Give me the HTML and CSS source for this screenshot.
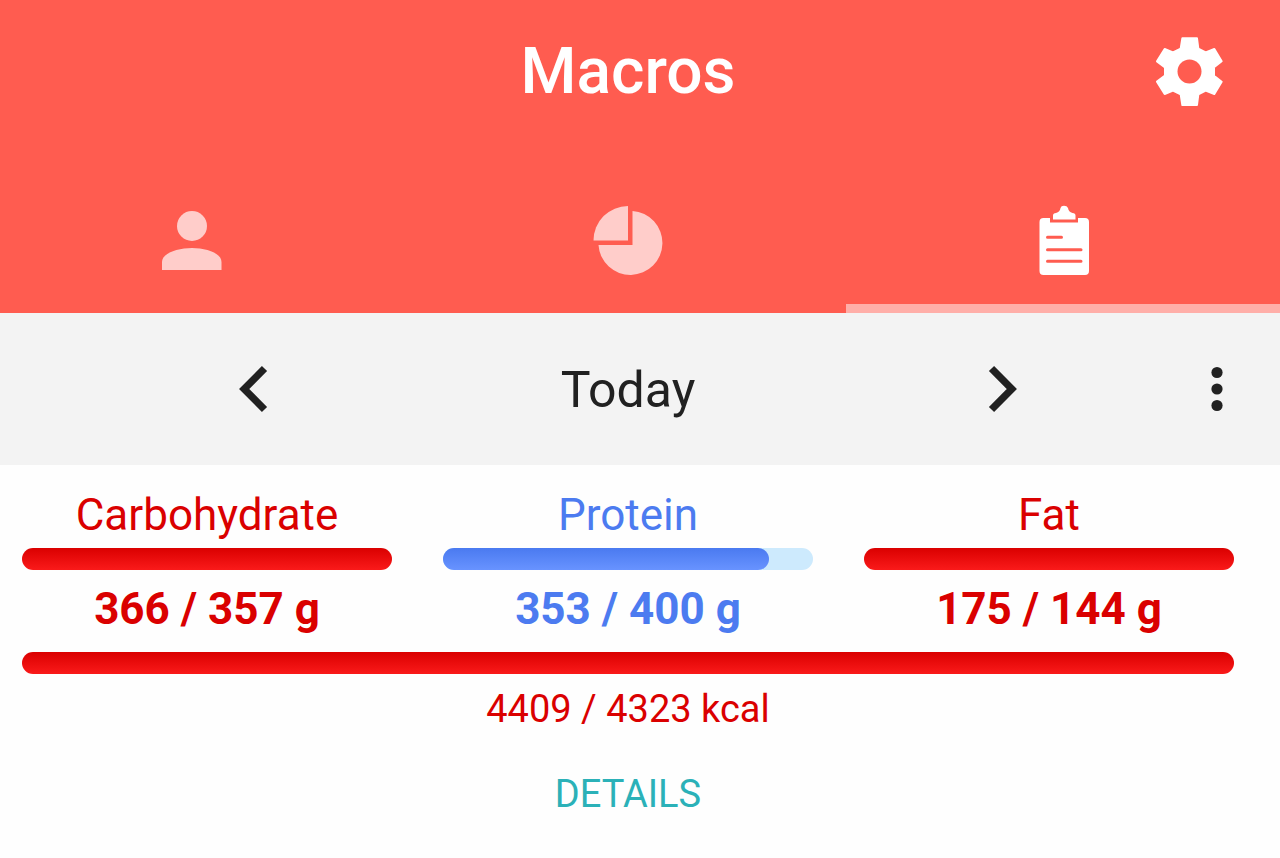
FILE: index.html
```html
<!DOCTYPE html>
<html lang="en">
  <head>
    <meta charset="UTF-8" />
    <meta name="viewport" content="width=device-width, initial-scale=1" />
    <title>Macros</title>
    <link rel="stylesheet" href="styles.css">
  </head>
  <body>
    <div class="app">
      <header class="header">
        <div class="toolbar">
          <h1 class="title">Macros</h1>
          <button class="icon-button settings" type="button" aria-label="Settings">
            <svg width="83" height="83" viewBox="58 33 249 249">
              <path class="gear" d="M158 55H202L206 86L228 97L254 87L276 124L253 142V167L276 185L254 222L228 212L206 223L202 255H158L153 223L130 212L105 222L82 185L106 167V142L82 124L105 87L130 97L153 86Z" />
              <circle class="gear-hole" cx="179.500" cy="154.500" r="36" />
            </svg>
          </button>
        </div>

        <nav class="tabs">
          <button class="tab" type="button" aria-label="Profile">
            <svg width="72" height="72" viewBox="0 0 72 72" fill="currentColor">
              <circle cx="36" cy="21" r="15" />
              <path d="M6 65V57C6 48 22 43 36 43S65.500 48 65.500 57V65Z" />
            </svg>
          </button>
          <button class="tab" type="button" aria-label="Chart">
            <svg width="72" height="72" viewBox="0 0 72 72" fill="currentColor">
              <path d="M36 1V35.500H1.500A34.500 34.500 0 0 1 36 1Z" />
              <path d="M40.500 6A32 32 0 1 1 6.500 40H40.500Z" />
            </svg>
          </button>
          <button class="tab active" type="button" aria-label="Diary">
            <svg width="72" height="72" viewBox="0 0 72 72" fill="currentColor">
              <path d="M15.500 13H22V17.500H50V13H57Q61 13 61 17V66Q61 70 57 70H15.500Q11.500 70 11.500 66V17Q11.500 13 15.500 13Z" />
              <path d="M25 14.500V10.500Q25 8 28 8Q32 7 32.500 3Q33 .7 36 .7T40 3Q40.500 7 44.500 8Q47.500 8 47.500 10.500V14.500Z" />
              <path class="lines" d="M19.500 32.300H33.500M19.500 44.700H53M19.500 56.300H53" />
            </svg>
          </button>
        </nav>
      </header>

      <div class="day-bar">
        <div class="day-switch">
          <button class="icon-button" type="button" aria-label="Previous day">
            <svg width="30" height="48" viewBox="0 0 30 48">
              <path class="chevron" d="M25.500 3.500L5.200 24L25.500 44.500" />
            </svg>
          </button>
          <span class="day">Today</span>
          <button class="icon-button" type="button" aria-label="Next day">
            <svg width="30" height="48" viewBox="0 0 30 48">
              <path class="chevron" d="M4.500 3.500L24.800 24L4.500 44.500" />
            </svg>
          </button>
        </div>
        <button class="icon-button" type="button" aria-label="More options">
          <svg width="12" height="46" viewBox="0 0 12 46" fill="currentColor">
            <circle cx="6" cy="6.500" r="5.600" />
            <circle cx="6" cy="23" r="5.600" />
            <circle cx="6" cy="39.500" r="5.600" />
          </svg>
        </button>
      </div>

      <main class="summary">
        <div class="macros">
          <section class="macro over">
            <h2 class="label">Carbohydrate</h2>
            <div class="bar"><div class="fill" style="width: 100%"></div></div>
            <p class="amount">366 / 357 g</p>
          </section>
          <section class="macro under">
            <h2 class="label">Protein</h2>
            <div class="bar"><div class="fill" style="width: 88%"></div></div>
            <p class="amount">353 / 400 g</p>
          </section>
          <section class="macro over">
            <h2 class="label">Fat</h2>
            <div class="bar"><div class="fill" style="width: 100%"></div></div>
            <p class="amount">175 / 144 g</p>
          </section>
        </div>

        <section class="energy over">
          <div class="bar"><div class="fill" style="width: 100%"></div></div>
          <p class="kcal">4409 / 4323 kcal</p>
        </section>

        <button class="details" type="button">DETAILS</button>
      </main>
    </div>
  </body>
</html>
```
FILE: styles.css
```css
* {
  box-sizing: border-box;
}

body {
  margin: 0;
  font-family: Roboto, sans-serif;
  color: #212121;
  background-color: #fefefe;
  overflow-x: hidden;
}

h1,
h2,
p {
  margin: 0;
}

button {
  padding: 0;
  border: none;
  background: none;
  color: inherit;
  font-family: inherit;
  cursor: pointer;
}

svg {
  display: block;
}

/* runs a little past both window edges */
.app {
  margin: 0 -2px 0 -26px;
}

.header {
  color: white;
  background-color: #ff5c50;
}

.toolbar {
  display: grid;
  grid-template-columns: 1fr auto 1fr;
  align-items: center;
  height: 144px;
  padding: 0 50px;
}

.title {
  grid-column: 2;
  font-size: 64px;
  line-height: 76px;
  font-weight: 500;
}

.icon-button {
  display: grid;
  place-items: center;
}

.settings {
  justify-self: end;
}

.gear {
  fill: white;
  stroke: white;
  stroke-width: 6;
  stroke-linejoin: round;
}

.gear-hole {
  fill: #ff5c50;
}

.tabs {
  display: flex;
  padding-top: 24px;
}

.tab {
  flex: 1;
  display: grid;
  justify-items: center;
  padding: 37px 0 27px;
  border-bottom: 9px solid transparent;
  color: #ffcdca;
}

.tab.active {
  color: white;
  border-bottom-color: #ffaea8;
}

.lines {
  fill: none;
  stroke: #ff5c50;
  stroke-width: 3;
  stroke-linecap: round;
}

.day-bar {
  display: grid;
  grid-template-columns: 1fr 130px;
  align-items: center;
  padding-left: 130px;
  height: 152px;
  background-color: #f3f3f3;
}

.day-switch {
  display: grid;
  grid-template-columns: 2fr 3fr 2fr;
  align-items: center;
}

.day {
  padding-top: 2px;
  font-size: 50px;
  line-height: 60px;
  text-align: center;
}

.chevron {
  fill: none;
  stroke: #212121;
  stroke-width: 7.3;
}

/* macro totals */
.summary {
  display: flex;
  flex-direction: column;
  padding: 24px 48px;
  text-align: center;
}

.macros {
  display: grid;
  grid-template-columns: repeat(3, 1fr);
  gap: 51px;
}

.over {
  color: #da0000;
}

.under {
  color: #4c7bf0;
}

.label {
  font-size: 44px;
  line-height: 52px;
  font-weight: 400;
}

.bar {
  height: 22px;
  margin: 7px 0 13px;
  border-radius: 11px;
  background-color: #cdeafd;
}

.over .bar {
  background-color: transparent;
}

.fill {
  height: 100%;
  border-radius: 11px;
}

.over .fill {
  background: linear-gradient(#da0000, #fa1a1a);
}

.under .fill {
  background: linear-gradient(#4a7af0, #6893ff);
}

.amount {
  font-size: 44px;
  line-height: 52px;
  font-weight: 700;
}

.energy {
  margin-top: 10px;
}

.kcal {
  font-size: 38px;
  line-height: 44px;
}

.details {
  align-self: center;
  margin-top: 41px;
  color: #2bb1b8;
  font-size: 38px;
  line-height: 44px;
}
```
